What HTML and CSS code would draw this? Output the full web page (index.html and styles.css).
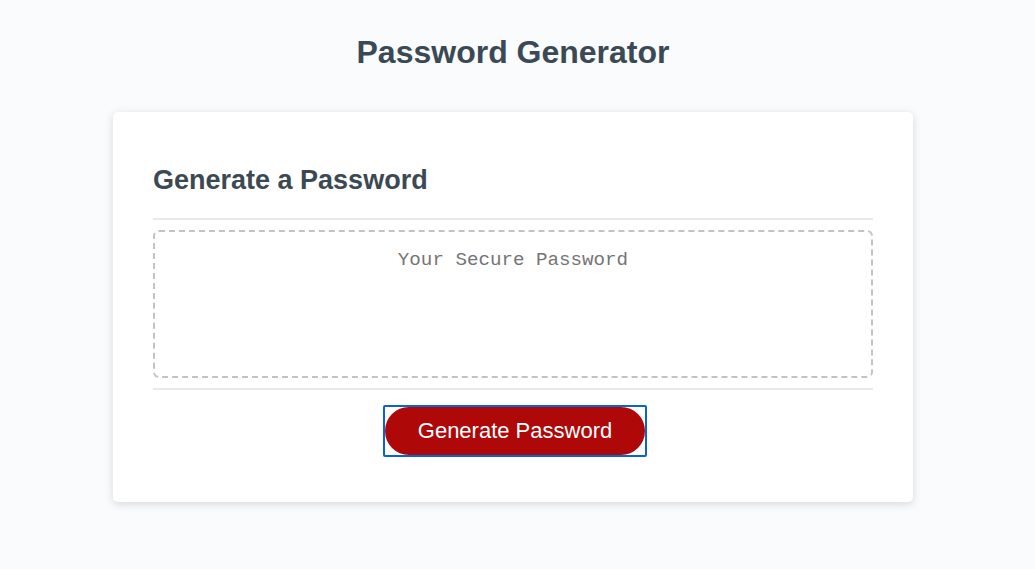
FILE: index.html
```html
<!DOCTYPE html>
<html lang="en">
<head>
<meta charset="UTF-8">
<title>Password Generator</title>
<link rel="stylesheet" href="styles.css">
</head>
<body>
<div class="wrapper">
  <header class="page-header">
    <h1 class="page-title">Password Generator</h1>
  </header>
  <div class="card">
    <div class="card-header">
      <h2 class="card-title">Generate a Password</h2>
    </div>
    <div class="card-body">
      <textarea readonly class="password" placeholder="Your Secure Password" aria-label="Generated Password"></textarea>
    </div>
    <div class="card-footer">
      <span class="focus-ring"><button class="btn" type="button">Generate Password</button></span>
    </div>
  </div>
</div>
</body>
</html>
```

FILE: styles.css
```css
* {
  box-sizing: border-box;
}

html, body {
  height: 100%;
}

body {
  margin: 0;
  font-family: "Liberation Sans", Arial, sans-serif;
  background-color: #f9fbfd;
  color: #3b4954;
}

.wrapper {
  padding: 34px 29px 0 20px;
}

.page-header {
  text-align: center;
}

.page-title {
  margin: 0;
  font-size: 32px;
  font-weight: bold;
  line-height: 36px;
}

.card {
  margin: 42px auto 0;
  width: 800px;
  background-color: #ffffff;
  border-radius: 5px;
  box-shadow: rgba(0, 0, 0, 0.15) 0 2px 8px 0;
  padding: 30px 40px;
  font-size: 18px;
}

.card-header::after {
  content: "";
  display: block;
  height: 2px;
  background: #e7e9eb;
}

.card-title {
  margin: 23px 0 22px;
  font-size: 27px;
  font-weight: bold;
  line-height: 31px;
}

.card-body {
  padding: 10px 0;
}

.password {
  display: block;
  width: 100%;
  height: 148px;
  padding: 17px 20px 20px;
  border: 2px dashed #c0c4c9;
  border-radius: 6px;
  resize: none;
  overflow: hidden;
  font-family: "Liberation Mono", "Courier New", monospace;
  font-size: 19.2px;
  text-align: center;
  color: #333;
  background: #fff;
  outline: none;
}

.password::placeholder {
  color: #757575;
}

.card-footer {
  text-align: center;
}

.card-footer::before {
  content: "";
  display: block;
  height: 2px;
  background: #e7e9eb;
}

.focus-ring {
  display: inline-block;
  margin: 15px 16px 15px 20px;
  border: 2px solid #0b63ce;
  border-radius: 2px;
  line-height: 0;
}

.btn {
  display: block;
  height: 48px;
  padding: 0 33px;
  border: none;
  border-radius: 25px;
  background-color: #af0808;
  color: #ffffff;
  font-family: "Liberation Sans", Arial, sans-serif;
  font-size: 22px;
  line-height: 48px;
  cursor: pointer;
}
```
